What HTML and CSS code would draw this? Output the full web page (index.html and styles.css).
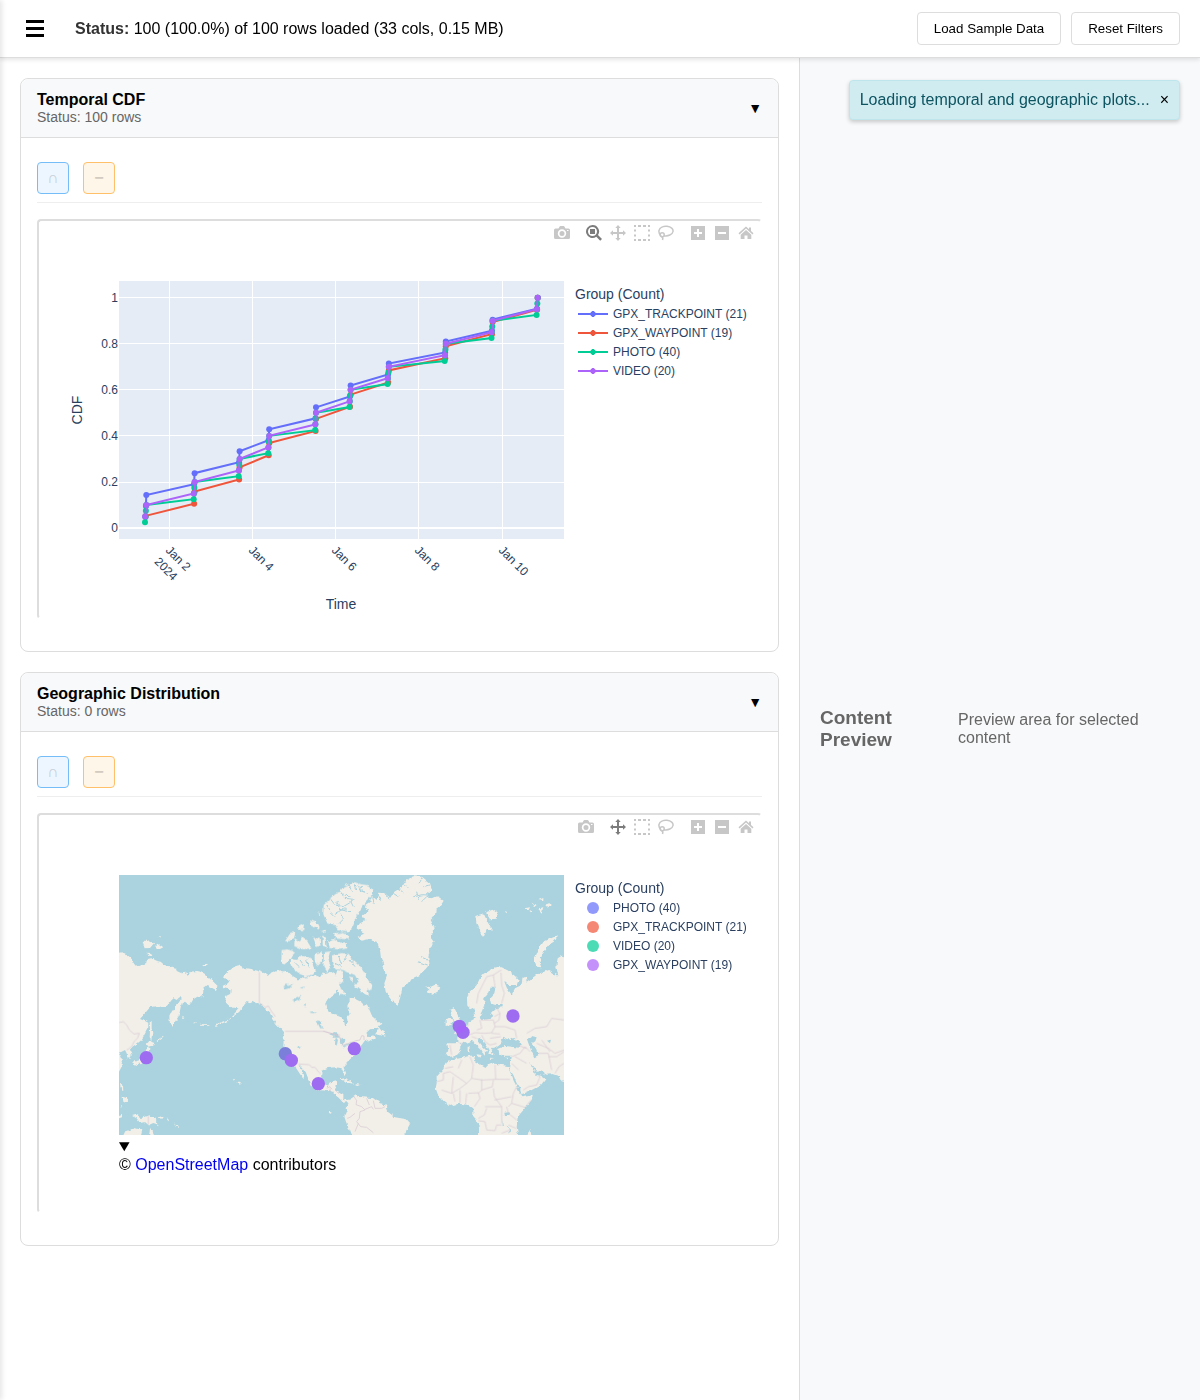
FILE: index.html
```html
<!DOCTYPE html>
<html lang="en">
<head>
<meta charset="utf-8">
<meta name="viewport" content="width=device-width, initial-scale=1">
<title>Data Explorer</title>
<link rel="stylesheet" href="styles.css">
</head>
<body>
<svg class="sprite" aria-hidden="true">
  <symbol id="i-camera" viewBox="0 0 16 16"><path fill-rule="evenodd" d="M4.500 3.500 5.500 1.700Q5.800 1 6.500 1H9.500Q10.200 1 10.500 1.700L11.500 3.500H14.500Q16 3.500 16 5V12.500Q16 14 14.500 14H1.500Q0 14 0 12.500V5Q0 3.500 1.500 3.500ZM8 4.300A4.200 4.200 0 1 0 8 12.700A4.200 4.200 0 1 0 8 4.300ZM8 6A2.500 2.500 0 1 1 8 11A2.500 2.500 0 1 1 8 6ZM13 5V6H14.500V5Z"/></symbol>
  <symbol id="i-zoom" viewBox="0 0 16 16"><path fill-rule="evenodd" d="M6.500 0A6.500 6.500 0 1 0 10.300 11.800L14.200 15.700L16 13.900L12 10.100A6.500 6.500 0 0 0 6.500 0ZM6.500 2A4.500 4.500 0 1 1 6.500 11A4.500 4.500 0 1 1 6.500 2Z"/><path d="M4 4H9V9H4Z"/></symbol>
  <symbol id="i-pan" viewBox="0 0 16 16"><path d="M8 0 10.700 3H9V7H13V5.300L16 8 13 10.700V9H9V13H10.700L8 16 5.300 13H7V9H3V10.700L0 8 3 5.300V7H7V3H5.300Z"/></symbol>
  <symbol id="i-select" viewBox="0 0 16 16"><path d="M0 0h2v2H0zM4 0h3v2H4zM9 0h3v2H9zM14 0h2v2h-2zM0 4.500h2v2H0zM0 9.500h2v2H0zM14 4.500h2v2h-2zM14 9.500h2v2h-2zM0 14h2v2H0zM4 14h3v2H4zM9 14h3v2H9zM14 14h2v2h-2z"/></symbol>
  <symbol id="i-lasso" viewBox="0 0 16 16"><g fill="none" stroke="currentColor" stroke-width="1.500"><path d="M3 11C1.500 9.500 .5 8 1 5.500C1.800 2.500 5.500 1 9 1.300C13 1.800 15.500 4 15 6.500C14.500 9.500 10 11.500 6 10.700"/><circle cx="4.200" cy="9.700" r="2"/><path d="M3.500 11.500Q5.500 12.500 4.500 15"/></g></symbol>
  <symbol id="i-plus" viewBox="0 0 16 16"><path fill-rule="evenodd" d="M1 1H15V15H1ZM7 4V7H4V9H7V12H9V9H12V7H9V4Z"/></symbol>
  <symbol id="i-minus" viewBox="0 0 16 16"><path fill-rule="evenodd" d="M1 1H15V15H1ZM4 7V9H12V7Z"/></symbol>
  <symbol id="i-home" viewBox="0 0 16 16"><path d="M8 1.500 11 4.200V2.500H13V6L15.500 8.300 14.500 9.400 8 3.600 1.500 9.400 .5 8.300Z"/><path d="M8 5 13.300 9.700V14H9.500V10.500H6.500V14H2.700V9.700Z"/></symbol>
</svg>

<header class="topbar">
  <button class="menu" aria-label="Menu"><svg viewBox="0 0 18 18"><path d="M0 0h18v3H0zM0 7h18v3H0zM0 14h18v3H0z"/></svg></button>
  <p class="status"><strong>Status:</strong> 100 (100.0%) of 100 rows loaded (33 cols, 0.15 MB)</p>
  <button class="btn">Load Sample Data</button>
  <button class="btn">Reset Filters</button>
</header>

<div class="layout">
  <main class="plots">
    <section class="card">
      <header class="card-head">
        <div><h2>Temporal CDF</h2><p>Status: 100 rows</p></div>
        <button class="collapse" aria-label="Collapse">▼</button>
      </header>
      <div class="card-body">
        <div class="tools">
          <button class="tool blue" aria-label="Intersect">∩</button>
          <button class="tool orange" aria-label="Subtract">−</button>
        </div>
        <div class="plot">
          <div class="modebar">
            <button aria-label="Download plot"><svg><use href="#i-camera"/></svg></button>
            <span class="modegroup">
              <button class="active" aria-label="Zoom"><svg><use href="#i-zoom"/></svg></button>
              <button aria-label="Pan"><svg><use href="#i-pan"/></svg></button>
              <button aria-label="Box select"><svg><use href="#i-select"/></svg></button>
              <button aria-label="Lasso select"><svg><use href="#i-lasso"/></svg></button>
            </span>
            <span class="modegroup">
              <button aria-label="Zoom in"><svg><use href="#i-plus"/></svg></button>
              <button aria-label="Zoom out"><svg><use href="#i-minus"/></svg></button>
              <button aria-label="Reset"><svg><use href="#i-home"/></svg></button>
            </span>
          </div>
          <div class="plot-grid">
            <svg class="chart" viewBox="39 245 525 372" role="img" aria-label="CDF by time">
              <rect x="119" y="281" width="445" height="258" fill="#e5ecf6"/>
              <path class="grid" d="M169.500 281V539M252.500 281V539M335.500 281V539M418.500 281V539M502.500 281V539M119 297.500H564M119 343.500H564M119 389.500H564M119 435.500H564M119 482.500H564"/>
              <path class="zero" d="M119 528H564"/>
              <g id="series"></g>
              <g class="tick" text-anchor="end">
                <text x="118" y="302">1</text><text x="118" y="348">0.8</text><text x="118" y="394">0.6</text><text x="118" y="440">0.4</text><text x="118" y="486">0.2</text><text x="118" y="532">0</text>
              </g>
              <g class="tick">
                <text transform="translate(165 551) rotate(45)"><tspan x="0">Jan 2</tspan><tspan x="0" dy="16">2024</tspan></text>
                <text transform="translate(248 551) rotate(45)">Jan 4</text>
                <text transform="translate(331 551) rotate(45)">Jan 6</text>
                <text transform="translate(414 551) rotate(45)">Jan 8</text>
                <text transform="translate(498 551) rotate(45)">Jan 10</text>
              </g>
              <text class="axis" x="341" y="609" text-anchor="middle">Time</text>
              <text class="axis" transform="translate(82 410) rotate(-90)" text-anchor="middle">CDF</text>
            </svg>
            <div class="legend">
              <h3>Group (Count)</h3>
              <ul>
                <li class="c1"><i class="line"></i>GPX_TRACKPOINT (21)</li>
                <li class="c2"><i class="line"></i>GPX_WAYPOINT (19)</li>
                <li class="c3"><i class="line"></i>PHOTO (40)</li>
                <li class="c4"><i class="line"></i>VIDEO (20)</li>
              </ul>
            </div>
          </div>
        </div>
      </div>
    </section>

    <section class="card">
      <header class="card-head">
        <div><h2>Geographic Distribution</h2><p>Status: 0 rows</p></div>
        <button class="collapse" aria-label="Collapse">▼</button>
      </header>
      <div class="card-body">
        <div class="tools">
          <button class="tool blue" aria-label="Intersect">∩</button>
          <button class="tool orange" aria-label="Subtract">−</button>
        </div>
        <div class="plot">
          <div class="modebar">
            <button aria-label="Download plot"><svg><use href="#i-camera"/></svg></button>
            <span class="modegroup">
              <button class="active" aria-label="Pan"><svg><use href="#i-pan"/></svg></button>
              <button aria-label="Box select"><svg><use href="#i-select"/></svg></button>
              <button aria-label="Lasso select"><svg><use href="#i-lasso"/></svg></button>
            </span>
            <span class="modegroup">
              <button aria-label="Zoom in"><svg><use href="#i-plus"/></svg></button>
              <button aria-label="Zoom out"><svg><use href="#i-minus"/></svg></button>
              <button aria-label="Reset"><svg><use href="#i-home"/></svg></button>
            </span>
          </div>
          <div class="plot-grid">
            <div class="map">
              <svg viewBox="0 0 1335 780" role="img" aria-label="World map">
                <defs><filter id="coast" x="0" y="0" width="1335" height="780" filterUnits="userSpaceOnUse"><feTurbulence type="fractalNoise" baseFrequency=".07" numOctaves="3" seed="4"/><feDisplacementMap in="SourceGraphic" scale="12" xChannelSelector="R" yChannelSelector="G"/></filter></defs>
                <rect width="1335" height="780" fill="#aad3df"/>
                <g filter="url(#coast)">
                  <g class="land">
                    <g transform="translate(-27 -15)">
                      <path d="M0 253L45 250 52 258 62 262 68 275 80 290 92 285 108 284 112 266 125 265 140 272 155 275 165 284 172 292 185 290 198 293 200 303 215 310 228 308 233 318 242 305 262 303 275 306 285 312 298 325 310 335 323 348 318 360 308 355 300 350 290 345 278 355 280 365 277 382 262 380 250 388 243 400 235 403 225 395 215 400 212 412 208 432 205 440 195 455 188 470 180 462 178 440 185 425 195 412 205 400 215 385 208 382 200 390 190 385 178 400 170 408 150 410 140 408 120 412 105 430 90 447 103 452 115 458 115 472 108 485 100 500 92 512 80 522 70 528 60 538 65 555 62 566 52 565 50 550 45 540 35 545 25 548 35 565 35 590 27 605 0 610Z"/>
                      <path d="M119 455 125 453 125 475 130 490 125 500 124 516 119 500 120 480ZM118 513 135 520 125 527 115 530 110 522ZM112 530 121 535 119 548 128 565 112 577 90 580 83 573 100 562ZM67 576 78 570 88 575 80 588 70 583Z"/>
                      <path d="M98 218 108 208 118 213 132 220 120 234 104 235ZM134 228 148 223 160 232 150 237ZM112 248 122 249 127 258 115 258ZM277 286 285 281 294 286 285 291ZM146 200 152 198 152 204Z"/>
                      <path d="M30 640 39 645 40 665 34 662ZM38 680 52 685 50 700 40 695ZM27 735 36 732 36 742 27 745ZM30 705 36 708 33 714ZM66 738 80 734 95 744 115 736 132 742 142 752 136 755 150 769 130 762 118 767 105 756 90 759 80 745ZM38 800 45 785 60 780 72 773 97 781 92 800ZM117 800 121 768 130 788 136 800ZM145 742 160 737 155 746ZM170 742 180 750 178 754ZM190 755 205 770 203 774Z"/>
                      <path d="M368 626 376 631 372 633ZM383 634 392 640 386 645ZM656 726 663 726 660 731ZM215 440 224 444 222 448ZM250 456 258 458 256 462ZM270 464 298 466 298 468 270 467ZM315 464 350 450 352 454 317 468ZM140 512 160 500 160 503 142 516Z"/>
                      <path d="M340 320 355 302 368 292 385 286 400 293 425 298 448 304 460 308 475 314 495 306 510 300 520 308 535 305 548 318 565 328 580 330 600 325 615 315 630 322 645 315 660 305 675 315 690 350 670 375 655 385 645 400 650 420 668 435 700 450V593L668 592 650 595 635 602 633 612 634 630 642 650 653 655 658 640 676 632 679 645 672 658 700 672V690L668 668 650 662 625 660 603 645 600 630 590 612 578 597 565 583 582 622 578 624 562 600 552 585 545 572 535 560 525 545 520 530 521 505 525 490 515 478 500 462 490 448 480 430 465 418 455 402 442 400 428 396 420 400 410 396 400 408 388 425 372 438 350 452 372 432 386 417 378 411 365 415 355 405 345 395 348 378 360 372 362 358 340 355 337 348 350 342 360 335Z"/>
                    </g>
                    <g transform="translate(483 -15)">
                      <path d="M148 88 165 70 180 64 190 50 205 42 225 37 245 43 265 46 280 62 275 78 262 92 250 105 240 120 230 138 222 158 215 174 205 187 188 185 172 180 168 165 150 163 142 160 130 132 131 105Z"/>
                      <path d="M158 190 185 188 208 195 205 208 170 206ZM144 215 165 208 175 218 200 217 202 235 180 239 150 234ZM5 240 25 238 45 248 35 258 25 275 12 284 4 272ZM33 265 50 267 65 255 80 262 95 268 100 290 108 300 95 315 75 319 60 312 45 300 32 285ZM15 214 32 188 46 188 42 204 28 213ZM44 205 60 215 66 203 80 212 95 235 70 237 43 229ZM90 148 105 155 120 172 116 178 94 166ZM99 200 108 207 118 202 122 227 110 231ZM128 195 136 205 140 233 128 226ZM57 166 72 160 70 180 54 180ZM104 250 125 246 126 275 115 286 104 270ZM132 247 150 244 145 265 152 290 140 308 130 292ZM112 128 120 130 118 137ZM122 184 136 180 138 188Z"/>
                      <path d="M156 256 185 249 207 252 215 268 235 285 250 303 265 330 277 345 274 360 262 355 267 378 250 370 235 357 224 346 237 338 225 315 205 307 190 300 170 298 157 280ZM170 348 185 358 198 372 180 376ZM206 320 220 322 218 334ZM0 305 15 303 30 318 55 330 75 322 100 320 120 322 130 305 150 322 165 322 172 300 188 305 190 330 175 345 168 350 155 370 145 378 135 400 138 430H0Z"/>
                    </g>
                    <g transform="translate(513 225)">
                      <path d="M60 110 120 130 107 150 105 165 112 185 135 195 150 200 162 215 167 229 173 220 170 200 179 190 172 170 179 155 179 140 200 148 215 155 222 170 232 165 245 195 262 210 274 222 265 236 240 238 228 250 232 262 250 256 255 265 237 277 226 270 215 285 205 297 200 310 190 320 180 328 172 338 160 350 168 372 163 374 155 355 140 350 120 353 105 352 95 362 93 380 100 402 113 412 118 398 137 391 139 402 130 418 147 427 153 442 165 451 185 448 180 456 162 458 148 442 128 425 105 418 85 422 60 402 20 300Z"/>
                      <path d="M256 252 268 233 274 242 284 246 286 260 272 256ZM150 388 165 385 180 392 192 402 175 398ZM195 402 215 404 205 408ZM172 407 182 408ZM118 486 126 488 121 491Z"/>
                      <path d="M167 475 180 448 198 436 210 441 232 443 250 445 270 460 290 464 294 486 315 502 350 508 361 520 350 540 338 560H185L168 515 163 500 170 488Z"/>
                    </g>
                    <g transform="translate(648 -15)">
                      <path d="M64 175 75 160 95 150 79 140 100 125 90 105 105 95 112 78 125 90 130 68 150 70 165 84 178 65 200 52 215 30 235 19 262 21 285 40 291 58 272 72 290 85 305 78 326 92 318 105 302 118 300 135 287 150 299 175 285 200 296 215 285 240 280 262 284 285 272 300 255 315 232 325 215 347 202 355 195 385 188 404 175 395 165 385 152 365 148 340 157 315 140 295 145 285 138 265 135 240 125 215 100 208 80 212 68 200 90 190Z"/>
                      <path d="M271 348 285 352 300 344 316 350 312 362 292 374 277 366 284 360ZM421 138 440 132 448 135 455 150 470 180 455 180 445 203 433 180 424 160ZM453 128 475 119 491 130 485 146 465 148ZM568 115 585 112 580 122ZM590 100 605 105 597 112ZM610 90 625 84 625 94ZM608 115 625 112 620 128ZM630 104 642 100 650 106 640 115ZM583 125 594 124 590 132ZM510 124 518 124 514 130Z"/>
                      <path d="M669 196 660 213 640 225 622 250 614 275 620 292 604 290 597 270 610 240 625 216 645 206Z"/>
                      <path d="M396 385 400 372 412 360 425 345 435 325 445 312 460 302 480 292 500 292 520 302 540 318 551 330 545 345 520 345 508 335 516 355 530 374 540 355 560 345 562 325 572 320 575 335 600 318 610 308 622 312 640 300 655 311 670 318 664 290 668 265 680 257 700 260V640L680 634 672 618 655 612 635 614 618 604 605 605 590 585 582 580 595 600 605 615 615 617 631 628 618 645 600 655 575 668 560 672 555 655 545 640 535 615 525 600 527 580 530 557 505 557 490 550 487 537 510 528 530 530 550 533 562 525 554 513 540 508 530 500 520 508 505 500 498 522 485 532 476 533 470 540 476 557 462 550 458 535 448 520 435 505 426 508 440 525 456 540 448 557 440 540 420 520 410 512 395 518 385 515 378 525 372 545 360 558 345 560 335 555 340 540 337 520 360 520 370 518 370 500 355 488 362 482 380 478 398 465 402 455 412 450 422 445 416 430 424 422 430 440 440 450 465 446 475 438 468 428 482 415 500 412 500 405 480 405 468 400 464 385 478 370 482 350 468 350 460 370 448 385 448 405 440 425 432 440 422 430 418 412 405 418 397 410Z"/>
                      <path d="M345 420 358 414 366 430 372 445 386 462 378 478 358 483 360 462 352 440ZM332 450 345 441 353 452 348 465 332 468ZM398 530 404 530 403 545 398 543ZM424 553 440 555 436 563ZM464 566 478 567 466 570ZM514 563 523 563 518 568Z"/>
                      <path d="M350 568 375 565 405 557 420 557 417 572 430 580 450 592 462 580 490 583 518 588 525 605 535 630 545 650 560 682 594 676 590 690 570 715 548 740 545 770 550 800H432V770L425 750 415 738 415 715 400 705 380 702 365 702 345 708 325 692 308 672 302 655 305 640 305 620 325 598 335 578ZM570 800 586 780 590 800Z"/>
                    </g>
                  </g>
                  <g class="water">
                    <g transform="translate(-27 -15)"><path d="M518 345 530 340 532 348 550 342 538 356 522 358ZM548 385 560 385 575 377 570 388 552 396ZM572 352 585 350 580 356ZM580 407 588 402 588 412ZM598 425 618 424 610 430ZM622 452 630 455 640 475 630 472Z"/></g>
                    <g transform="translate(513 225)"><path d="M120 255 135 248 152 262 135 264ZM136 266 144 268 140 290 135 284ZM148 262 164 270 158 286 153 275ZM158 288 182 276 182 280 162 292ZM80 212 90 214 98 236 90 232ZM24 290 32 291 29 297Z"/></g>
                    <g transform="translate(648 -15)"><path d="M576 508 590 498 605 502 601 514 592 520 604 538 610 556 598 562 590 545 582 525ZM636 512 648 509 645 520ZM508 728 524 727 520 738 510 738ZM500 745 504 768 500 765ZM518 765 525 780 524 792Z"/></g>
                  </g>
                  <g class="fjords">
                    <g transform="translate(483 -15)"><path d="M150 85 165 105 190 110 215 95M180 65 195 85 220 88M205 45 215 65M232 40 240 62 265 70M165 130 185 120 210 125M140 105 150 120M175 160 190 145 180 130M220 110 210 90M150 125 165 140M200 255 190 275M210 270 225 290M175 258 185 285M60 270 75 290M45 278 58 290M80 270 88 295"/></g>
                    <g transform="translate(648 -15)"><path d="M150 70 160 88M130 72 140 92M175 70 190 80M190 55 205 68M202 45 220 52M235 80 262 74 288 76M245 68 250 90M262 24 252 40M285 45 262 50M255 260 280 270M250 275 278 285M260 95 275 80M112 80 118 98M5 95 15 115 35 118M10 60 25 75 50 78M60 45 65 60M80 48 76 66M0 280 20 290"/></g>
                  </g>
                </g>
                <g class="borders">
                  <g transform="translate(-27 -15)"><path d="M448 306V400L458 405 465 412 475 408 485 425 496 440M525 484H645L660 490 690 495M565 582 598 584 605 592 615 592 625 605 632 612M27 458 40 455 50 465 58 480 72 492 88 490 82 505 72 515 65 530 50 540M115 738V764M660 655 660 665"/></g>
                  <g transform="translate(513 225)"><path d="M100 244 130 252 150 262 158 286 182 278 198 272 210 270 215 257 222 258 222 270M110 415 120 410 126 418M135 420 148 432M192 440 200 452 198 464 215 470 225 480 210 485 208 505 200 515M172 505 180 502 195 490M225 478 245 470 250 478M230 445 238 465M250 452 255 475 275 475 285 470M200 515 212 530 230 532 250 548M205 520 195 545"/></g>
                  <g transform="translate(648 -15)"><path d="M425 400 430 370 445 340 455 320 475 315 480 350M475 315 490 305 500 300M498 308 500 345 508 370 500 400M480 405 495 430 478 440M495 430 492 450 478 460M435 450 440 475 425 480M402 462 392 478 402 490M438 450 475 450 480 470 510 470 540 480 545 505M345 525 350 555M372 518 385 522M400 495 420 488 450 490 470 488 480 470M410 500 425 505M440 495 450 515 465 525 485 520M465 505 498 500M470 490 495 492M575 490 600 475 635 470 650 445 687 450M605 520 640 535 660 550 687 540M530 560 555 550 570 530 585 545M540 560 575 580M530 580 550 600M565 660 580 650 605 645 615 620M610 550 640 550 650 600M640 560 665 560 687 545M620 510 645 545M545 525 575 535M660 610 672 590 687 580M330 595 355 590M305 635 325 630V610L345 605M345 605 395 640M370 595 380 570M405 560 415 585 410 625 395 640M410 625 440 630 482 628M480 585 482 628 525 628M440 628 440 660 430 670M355 620 350 670 320 660M355 670 360 695M375 660 375 700M395 670 392 700M350 670 375 655 395 640M400 670 430 668 435 685 418 710M440 660 472 650 475 630M475 655 478 680 500 710M478 690 530 680M545 650 535 670 530 700 520 710M530 700 570 712 588 690M450 710H500V760M455 715 448 735 430 745M430 752 450 755 455 780 480 782M480 782 485 765 500 765M515 710 520 730 545 750M520 765 543 775M500 790 525 780"/></g>
                </g>
                <g fill="#9d6cf1">
                  <circle cx="499" cy="536" r="20" fill="#7c7fda"/><circle cx="517" cy="556" r="20"/><circle cx="82" cy="548" r="20"/><circle cx="598" cy="626" r="20"/><circle cx="706" cy="521" r="20"/><circle cx="1021" cy="454" r="20"/><circle cx="1032" cy="472" r="20"/><circle cx="1182" cy="423" r="20"/>
                </g>
                <path d="M1012 472A20 20 0 0 1 1041 454A20 20 0 0 1 1012 472Z" fill="#a564f9"/>
              </svg>
              <details open>
                <summary aria-label="Toggle attribution"></summary>
                © <a href="https://www.openstreetmap.org/copyright">OpenStreetMap</a> contributors
              </details>
            </div>
            <div class="legend">
              <h3>Group (Count)</h3>
              <ul>
                <li class="c1"><i class="dot"></i>PHOTO (40)</li>
                <li class="c2"><i class="dot"></i>GPX_TRACKPOINT (21)</li>
                <li class="c3"><i class="dot"></i>VIDEO (20)</li>
                <li class="c4"><i class="dot"></i>GPX_WAYPOINT (19)</li>
              </ul>
            </div>
          </div>
        </div>
      </div>
    </section>
  </main>

  <aside class="preview">
    <h3>Content Preview</h3>
    <p>Preview area for selected content</p>
  </aside>
</div>

<div class="toast" role="status">Loading temporal and geographic plots...<button aria-label="Dismiss">×</button></div>
<script src="script.js"></script>
</body>
</html>
```
FILE: styles.css
```css
* { box-sizing: border-box; }
body {
  margin: 0;
  min-height: 100vh;
  display: flex;
  flex-direction: column;
  font: 16px/18px "Liberation Sans", Arial, sans-serif;
  color: #000;
  background: #fff;
}
/* shadow of the closed drawer on the window's left edge */
body::before {
  content: "";
  position: fixed;
  z-index: 30;
  top: 0;
  bottom: 0;
  left: -20px;
  width: 20px;
  box-shadow: 2px 0 5px rgba(0, 0, 0, .1);
}
h2, h3, p, ul { margin: 0; padding: 0; }
button { font-family: inherit; cursor: pointer; }
.sprite { display: none; }

.topbar {
  position: relative;
  z-index: 10;
  display: flex;
  align-items: center;
  gap: 10px;
  padding: 12px 20px;
  background: #fff;
  border-bottom: 1px solid #ddd;
  box-shadow: 0 2px 4px rgba(0, 0, 0, .1);
}
.menu {
  width: 30px;
  padding: 0 6px;
  border: 0;
  background: none;
}
.menu svg { display: block; width: 18px; height: 18px; }
.status { flex: 1; padding-left: 15px; }
.status strong { color: #333; }
.btn {
  height: 33px;
  padding: 0 16px;
  border: 1px solid #ddd;
  border-radius: 4px;
  background: #fff;
  color: #000;
  font-size: 13.333px;
}

.layout {
  flex: 1;
  display: grid;
  grid-template-columns: minmax(0, 2fr) minmax(0, 1fr);
}
.plots {
  display: flex;
  flex-direction: column;
  gap: 20px;
  padding: 20px;
  border-right: 1px solid #ddd;
}
.card { border: 1px solid #ddd; border-radius: 8px; }
.card-head {
  display: flex;
  align-items: center;
  justify-content: space-between;
  padding: 12px 16px;
  background: #f8f9fa;
  border-bottom: 1px solid #ddd;
  border-radius: 8px 8px 0 0;
}
.card-head h2 { font-size: 16px; }
.card-head p { color: #666; font-size: 14px; line-height: 16px; }
.collapse { padding: 0; border: 0; background: none; color: #000; font-size: 14px; }
.card-body { padding: 16px; }
.tools {
  display: flex;
  gap: 14px;
  padding: 8px 0;
  margin-bottom: 16px;
  border-bottom: 1px solid #eee;
}
.tool {
  width: 32px;
  height: 32px;
  padding: 0;
  border: 1px solid;
  border-radius: 4px;
  font-size: 16px;
  font-weight: 700;
}
.blue { border-color: #74bdf8; background: #edf6fe; color: #c3ced8; font-weight: 400; }
.orange { border-color: #ffc069; background: #fff6ea; color: #d3cac0; }

.plot {
  min-height: 400px;
  margin-bottom: 16px;
  border: 2px solid;
  border-color: #ddd #fff #fff #ddd;
  border-radius: 4px;
}
.modebar { display: flex; justify-content: flex-end; gap: 8px; padding-right: 2px; }
.modegroup { display: flex; }
.modebar button {
  width: 24px;
  height: 24px;
  padding: 4px;
  border: 0;
  background: none;
  color: #c7c7c7;
}
.modebar .active { color: #7c7c7c; }
.modebar svg { display: block; width: 16px; height: 16px; fill: currentColor; }

.plot-grid { display: grid; grid-template-columns: minmax(0, 1fr) 185px; gap: 11px; }
.chart { display: block; width: 100%; }
.grid { stroke: #fff; stroke-width: 1; }
.zero { stroke: #fff; stroke-width: 2; }
.tick { font-size: 12px; fill: #2a3f5f; }
.axis { font-size: 14px; fill: #2a3f5f; }
.legend { padding-top: 39px; color: #2a3f5f; }
.legend h3 { margin-bottom: 1px; font-size: 14px; font-weight: 400; line-height: 20px; }
.legend ul { list-style: none; }
.legend li {
  display: flex;
  align-items: center;
  gap: 5px;
  padding-left: 3px;
  font-size: 12px;
  line-height: 19px;
  white-space: nowrap;
}
.line {
  width: 30px;
  height: 6px;
  margin-bottom: 1px;
  background:
    radial-gradient(circle 3px, var(--c) 90%, transparent),
    linear-gradient(var(--c), var(--c)) center / 100% 2px no-repeat;
}
.dot { width: 12px; height: 12px; margin: 0 9px 1px; border-radius: 50%; background: var(--c); opacity: .7; }
.c1 { --c: #636efa; }
.c2 { --c: #ef553b; }
.c3 { --c: #00cc96; }
.c4 { --c: #ab63fa; }

.map { padding: 36px 0 0 80px; }
.map > svg { display: block; width: 100%; }
.map details { padding-top: 3px; }
.map a { color: #00e; text-decoration: none; }
.land { fill: #f2efe9; }
.water { fill: #aad3df; }
.fjords { fill: none; stroke: #aad3df; stroke-width: 3; }
.borders { fill: none; stroke: #d5c5d0; stroke-width: 2; }

.preview {
  display: flex;
  align-items: center;
  gap: 20px;
  padding: 20px;
  background: #f8f9fa;
  color: #666;
}
.preview h3 { flex: 0 1 118px; font-size: 19px; line-height: 22px; }
.preview p { flex: 1; }

.toast {
  position: fixed;
  z-index: 20;
  top: 80px;
  right: 20px;
  display: flex;
  align-items: center;
  gap: 10px;
  padding: 10px;
  border: 1px solid #bee5eb;
  border-radius: 4px;
  background: #d1ecf1;
  color: #0c5460;
  box-shadow: 0 2px 4px rgba(0, 0, 0, .2);
}
.toast button { padding: 0; border: 0; background: none; color: #000; font-size: 16px; line-height: 18px; }
```
FILE: script.js
```js
// First and last timestamp of each recording day, as x positions.
const days = [
  [145, 146.3], [193.7, 194.6], [238.7, 239.6], [268.2, 269.2], [315.2, 316],
  [349.5, 350.6], [387.6, 388.8], [444.7, 445.8], [491.5, 492.6], [536.6, 537.7]
];
const series = [
  { color: '#636efa', first: 3, perDay: 2, start: 0.4 },
  { color: '#ef553b', first: 1, perDay: 2, start: 0.5 },
  { color: '#00cc96', first: 4, perDay: 4, start: 0 },
  { color: '#ab63fa', first: 2, perDay: 2, start: 0.1 }
];
const ns = 'http://www.w3.org/2000/svg';
const root = document.getElementById('series');

for (const s of series) {
  const total = s.first + 9 * s.perDay;
  const points = [];
  days.forEach(([a, b], day) => {
    const n = day ? s.perDay : s.first;
    for (let i = 0; i < n; i++) {
      const t = n > 1 ? s.start + (1 - s.start) * i / (n - 1) : s.start;
      points.push([a + (b - a) * t, 528 - 230.3 * (points.length + 1) / total]);
    }
  });
  const line = document.createElementNS(ns, 'polyline');
  line.setAttribute('points', points.join(' '));
  line.setAttribute('fill', 'none');
  line.setAttribute('stroke', s.color);
  line.setAttribute('stroke-width', 2);
  root.append(line);
  for (const [x, y] of points) {
    const dot = document.createElementNS(ns, 'circle');
    dot.setAttribute('cx', x);
    dot.setAttribute('cy', y);
    dot.setAttribute('r', 3);
    dot.setAttribute('fill', s.color);
    root.append(dot);
  }
}
```
